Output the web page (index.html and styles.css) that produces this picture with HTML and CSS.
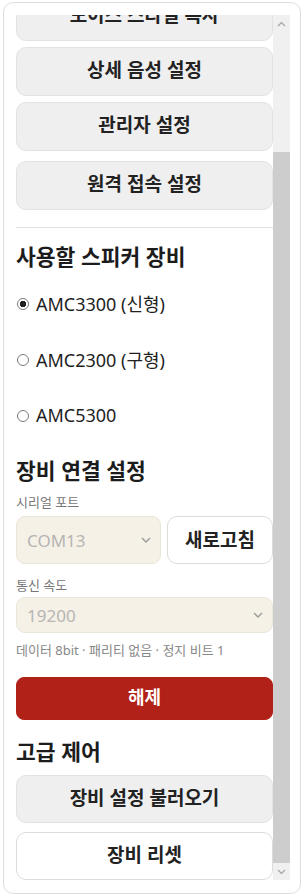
FILE: index.html
```html
<!DOCTYPE html>
<html lang="ko">
<head>
<meta charset="utf-8">
<title>스피커 설정</title>
<link rel="stylesheet" href="styles.css">
</head>
<body>
<div class="panel">
  <div class="viewport">
    <div class="content">
      <h3 class="heading">음성 설정</h3>
      <button class="btn btn-gray">보이스 스타일 복사</button>
      <button class="btn btn-gray">상세 음성 설정</button>
      <button class="btn btn-gray">관리자 설정</button>
      <button class="btn btn-gray btn-gap">원격 접속 설정</button>
      <hr class="divider">
      <h3 class="heading h-speaker">사용할 스피커 장비</h3>
      <div class="radios">
        <label class="radio-row"><input type="radio" name="dev" checked><span>AMC3300 (신형)</span></label>
        <label class="radio-row"><input type="radio" name="dev"><span>AMC2300 (구형)</span></label>
        <label class="radio-row"><input type="radio" name="dev"><span>AMC5300</span></label>
      </div>
      <h3 class="heading h-conn">장비 연결 설정</h3>
      <div class="field-label lbl-port">시리얼 포트</div>
      <div class="port-row">
        <div class="select select-port"><span>COM13</span><svg class="chev" width="10" height="6" viewBox="0 0 10 6"><path d="M1 1 L5 5 L9 1" fill="none" stroke="#9a9a9a" stroke-width="1.4"/></svg></div>
        <button class="btn btn-white btn-refresh">새로고침</button>
      </div>
      <div class="field-label lbl-baud">통신 속도</div>
      <div class="select select-baud"><span>19200</span><svg class="chev" width="10" height="6" viewBox="0 0 10 6"><path d="M1 1 L5 5 L9 1" fill="none" stroke="#9a9a9a" stroke-width="1.4"/></svg></div>
      <div class="help">데이터 8bit · 패리티 없음 · 정지 비트 1</div>
      <button class="btn btn-red">해제</button>
      <h3 class="heading h-adv">고급 제어</h3>
      <button class="btn btn-gray btn-load">장비 설정 불러오기</button>
      <button class="btn btn-white btn-reset">장비 리셋</button>
    </div>
  </div>
  <div class="scrollbar">
    <div class="sb-btn"><svg width="9" height="6" viewBox="0 0 9 6"><path d="M1 5 L4.5 1.5 L8 5" fill="none" stroke="#a3a3a3" stroke-width="1.2"/></svg></div>
    <div class="sb-track">
      <div class="sb-thumb"></div>
    </div>
    <div class="sb-btn"><svg width="9" height="6" viewBox="0 0 9 6"><path d="M1 1 L4.5 4.5 L8 1" fill="none" stroke="#a3a3a3" stroke-width="1.2"/></svg></div>
  </div>
</div>
</body>
</html>
```
FILE: styles.css
```css
* { box-sizing: border-box; }
html, body { margin: 0; padding: 0; background: #fff; }
body {
  font-family: "Noto Sans", "Noto Sans CJK KR", sans-serif;
  color: #222;
}
.panel {
  margin: 2px 3px 0 3px;
  width: 298px;
  height: 892px;
  border: 1px solid #dedede;
  border-radius: 10px;
  padding: 12px 9px 13px 12px;
  display: flex;
  flex-direction: row;
}
.viewport {
  width: 257px;
  height: 865px;
  overflow: hidden;
  display: flex;
  flex-direction: column;
  justify-content: flex-end;
}
.content {
  flex-shrink: 0;
  display: flex;
  flex-direction: column;
}
.heading {
  margin: 0;
  font-size: 21.5px;
  line-height: 24px;
  font-weight: 700;
  color: #1c1c1c;
}
.btn {
  font-family: "Noto Sans", "Noto Sans CJK KR", sans-serif;
  font-size: 19px;
  font-weight: 700;
  color: #222;
  border-radius: 10px;
  padding: 0 0 5px 0;
  width: 100%;
  height: 49px;
  margin-top: 6px;
  cursor: pointer;
}
.btn-gray { background: #efefef; border: 1px solid #e2e2e2; }
.btn-white { background: #fff; border: 1px solid #dcdcdc; }
.btn-gap { margin-top: 10px; }
.divider {
  border: 0;
  height: 1px;
  background: #e0e0e0;
  margin: 17px 0 0 0;
}
.h-speaker { margin-top: 17px; }
.radios {
  margin-top: 21px;
  display: flex;
  flex-direction: column;
  gap: 28px;
}
.radio-row {
  height: 28px;
  display: flex;
  align-items: center;
  font-size: 18px;
  color: #1f1f1f;
}
.radio-row span { position: relative; top: -1px; }
.radio-row input {
  appearance: none;
  -webkit-appearance: none;
  width: 12px;
  height: 12px;
  margin: 0 7px 0 1px;
  border: 1px solid #7a7a7a;
  border-radius: 50%;
  background: #fff;
}
.radio-row input:checked {
  background: radial-gradient(circle, #222 0 3px, #fff 3.5px);
}
.h-conn { margin-top: 29px; }
.field-label {
  font-size: 13px;
  line-height: 18px;
  color: #777;
}
.lbl-port { margin-top: 10px; }
.port-row {
  margin-top: 5px;
  display: flex;
  gap: 6px;
  height: 48px;
}
.select {
  background: #f5f1e6;
  border: 1px solid #ebe6da;
  border-radius: 9px;
  display: flex;
  align-items: center;
  justify-content: space-between;
  color: #b5b5b5;
  font-size: 17px;
}
.select-port {
  width: 145px;
  height: 48px;
  padding: 0 9px 0 10px;
}
.btn-refresh {
  width: 106px;
  height: 48px;
  margin-top: 0;
  padding-bottom: 3px;
}
.lbl-baud { margin-top: 12px; }
.select-baud {
  margin-top: 3px;
  height: 36px;
  padding: 0 9px 0 10px;
}
.help {
  margin-top: 8px;
  font-size: 13px;
  line-height: 18px;
  color: #888;
}
.btn-red {
  margin-top: 18px;
  height: 43px;
  background: #b22118;
  border: 1px solid #b22118;
  color: #fff;
  border-radius: 8px;
  font-size: 18px;
}
.h-adv { margin-top: 20px; }
.btn-load { margin-top: 11px; height: 48px; }
.btn-reset { margin-top: 9px; height: 48px; }
.scrollbar {
  width: 17px;
  height: 865px;
  display: flex;
  flex-direction: column;
  background: #f0f0f0;
}
.sb-btn {
  height: 17px;
  display: flex;
  align-items: center;
  justify-content: center;
}
.sb-track {
  flex: 1;
  display: flex;
  flex-direction: column;
  justify-content: flex-end;
}
.sb-thumb {
  height: 711px;
  background: #cdcdcd;
}
```
